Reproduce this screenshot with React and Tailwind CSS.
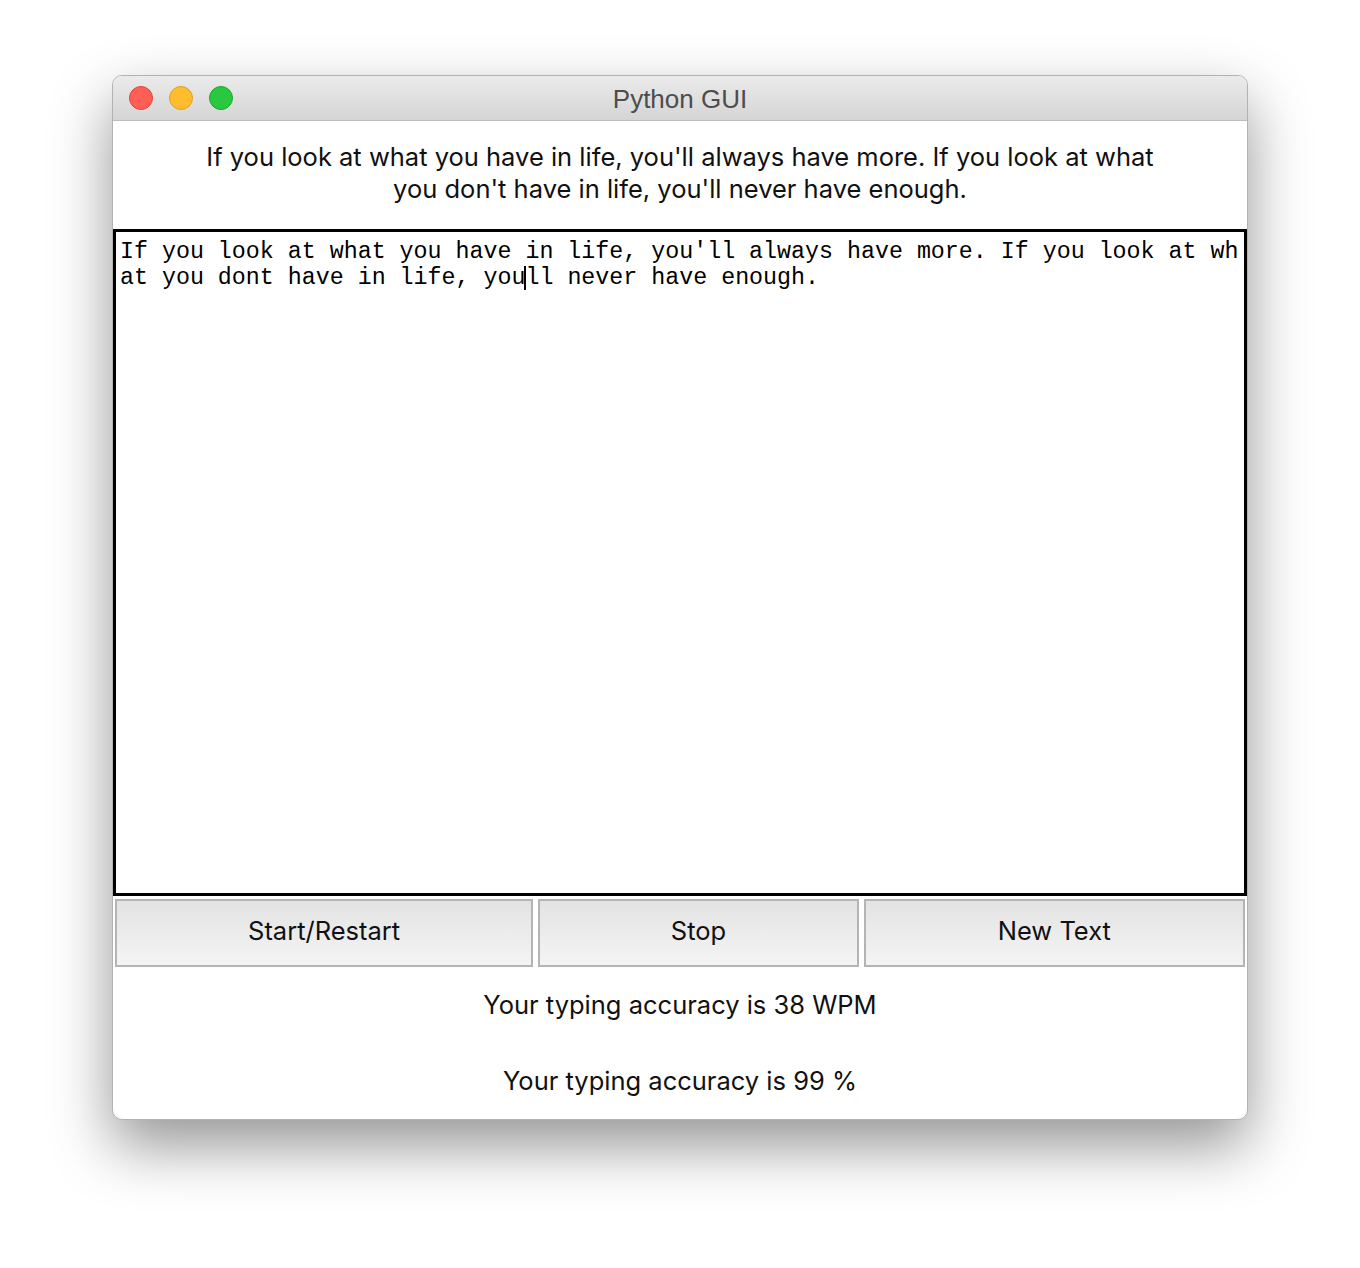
import React from 'react'

const sans = { fontFamily: 'Inter, "Liberation Sans", Arial, sans-serif' }
const title = { fontFamily: '"Liberation Sans", Arial, sans-serif' }

const TrafficLights = () => (
  <div className="flex items-center gap-4 pl-4">
    <span className="w-6 h-6 rounded-full bg-[#ff5f57] border border-[#e0443e]" />
    <span className="w-6 h-6 rounded-full bg-[#febc2e] border border-[#dea123]" />
    <span className="w-6 h-6 rounded-full bg-[#28c840] border border-[#1aab29]" />
  </div>
)

const Button = ({ label, w }) => (
  <button
    className={`${w} h-[68px] pb-[3px] border-2 border-[#b4b4b4] bg-gradient-to-b from-[#e3e3e3] to-[#f4f4f4] text-[25.5px] text-[#111]`}
    style={sans}
  >
    {label}
  </button>
)

const App = () => {
  return (
    <div className="w-full min-h-[1268px] bg-white flex justify-center pt-[75px]">
      <div className="w-[1136px] h-[1045px] flex flex-col rounded-[10px] overflow-hidden border border-[#b2b2b2] bg-white shadow-[0_26px_60px_rgba(0,0,0,0.42)]">
        {/* title bar */}
        <div className="relative h-[45px] shrink-0 flex items-center bg-gradient-to-b from-[#ebebeb] to-[#d5d5d5] border-b border-[#bdbdbd]">
          <TrafficLights />
          <div className="absolute inset-0 flex items-center justify-center pt-[2px] text-[26px] text-[#4d4d4d]" style={title}>
            Python GUI
          </div>
        </div>

        {/* quote label */}
        <div className="h-[108px] shrink-0 flex items-center justify-center pb-[4px]">
          <p className="text-[25.5px] leading-[32px] text-[#111] text-center" style={sans}>
            If you look at what you have in life, you'll always have more. If you look at what
            <br />
            you don't have in life, you'll never have enough.
          </p>
        </div>

        {/* text box */}
        <div className="h-[667px] shrink-0 border-[3px] border-black pt-[7px] pl-[4px]">
          <div
            className="text-[23.3px] leading-[26px] text-black whitespace-pre"
            style={{ fontFamily: '"Liberation Mono", "DejaVu Sans Mono", monospace' }}
          >
            <div>If you look at what you have in life, you'll always have more. If you look at wh</div>
            <div>
              at you dont have in life, you
              <span className="inline-block w-[2px] h-[24px] bg-black align-middle -mx-[1px]" />
              ll never have enough.
            </div>
          </div>
        </div>

        {/* buttons */}
        <div className="flex gap-[5px] px-[2px] pt-[3px]">
          <Button label="Start/Restart" w="w-[419px]" />
          <Button label="Stop" w="w-[321px]" />
          <Button label="New Text" w="w-[382px]" />
        </div>

        {/* results */}
        <div className="flex flex-col items-center pt-[22px] gap-[44px]" style={sans}>
          <p className="text-[25.5px] leading-[32px] text-[#111]">Your typing accuracy is 38 WPM</p>
          <p className="text-[25.5px] leading-[32px] text-[#111]">Your typing accuracy is 99 %</p>
        </div>
      </div>
    </div>
  )
}

export default App
